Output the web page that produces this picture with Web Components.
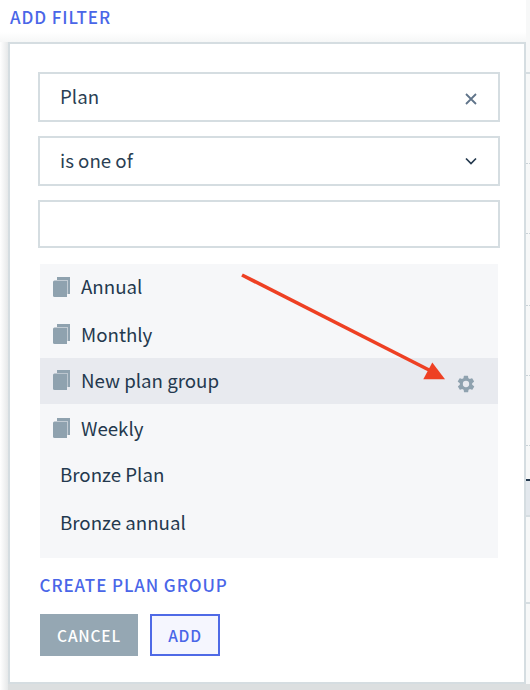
<!DOCTYPE html>
<html>
<head>
<meta charset="utf-8">
<style>
  html, body { margin: 0; height: 100%; background: #fff; overflow: hidden; }
  body { font-family: "Noto Sans CJK SC", "Noto Sans", sans-serif; color: #24394e; }
</style>
</head>
<body>
<filter-page>
  <filter-popup>
    <filter-field value="Plan" icon="clear"></filter-field>
    <filter-field value="is one of" icon="chevron"></filter-field>
    <filter-field short></filter-field>
    <plan-list>
      <plan-row group>Annual</plan-row>
      <plan-row group>Monthly</plan-row>
      <plan-row group active>New plan group</plan-row>
      <plan-row group>Weekly</plan-row>
      <plan-row>Bronze Plan</plan-row>
      <plan-row>Bronze annual</plan-row>
    </plan-list>
    <popup-link slot="footer">CREATE PLAN GROUP</popup-link>
    <popup-button slot="footer" kind="cancel">CANCEL</popup-button>
    <popup-button slot="footer" kind="add">ADD</popup-button>
  </filter-popup>
</filter-page>

<script>
class FilterPage extends HTMLElement {
  constructor() {
    super();
    this.attachShadow({ mode: "open" }).innerHTML = `
      <style>
        :host { display: block; position: relative; width: 530px; height: 690px; overflow: hidden; }
        .title { position: relative; padding: 5px 0 0 10px; font-size: 17px; line-height: 24px; font-weight: 500; letter-spacing: 0.9px; color: #4a66e8; }
        .arrow { position: absolute; left: 0; top: 0; pointer-events: none; }
        /* table that sits behind the popup, only its right edge shows */
        .behind { position: absolute; left: 526px; top: 0; width: 4px; height: 690px; background: #f7f8f8; }
        .behind i { position: absolute; left: 0; width: 4px; height: 2px; background: #d5dde1; }
        .behind i.dash { height: 1px; background: repeating-linear-gradient(90deg, #c9d2d7 0 2px, transparent 2px 3px); }
        .behind i.dark { height: 2px; background: #24394e; }
        .behind i.sel { height: 35px; background: #e3e8ed; }
        .top-shade { position: absolute; left: 0; top: 32px; width: 530px; height: 10px; background: linear-gradient(180deg, #fff, #f6f7f7); }
        .page-shade { position: absolute; left: 0; top: 42px; width: 8px; height: 648px; background: linear-gradient(90deg, #fff, #e6e8e9); }
        .bottom-shade { position: absolute; left: 8px; top: 684px; width: 522px; height: 6px; background: #dcdfe0; }
      </style>
      <div class="top-shade"></div>
      <div class="page-shade"></div>
      <div class="behind">
        <i style="top:72px"></i>
        <i class="dash" style="top:163px"></i>
        <i class="dash" style="top:233px"></i>
        <i class="dash" style="top:305px"></i>
        <i class="dash" style="top:375px"></i>
        <i class="dash" style="top:445px"></i>
        <i class="sel" style="top:481px"></i>
        <i class="dark" style="top:479px"></i>
        <i style="top:515px"></i>
        <i style="top:602px"></i>
      </div>
      <div class="bottom-shade"></div>
      <div class="title">ADD FILTER</div>
      <slot></slot>
      <svg class="arrow" width="530" height="690" viewBox="0 0 530 690">
        <path d="M242 275 L431 371" stroke="#ee4023" stroke-width="3.6" fill="none"/>
        <path d="M432.3 362.5 L445 379.3 L423.3 379.3 Z" fill="#ee4023"/>
      </svg>
    `;
  }
}

class FilterPopup extends HTMLElement {
  constructor() {
    super();
    this.attachShadow({ mode: "open" }).innerHTML = `
      <style>
        :host {
          display: block; position: relative; box-sizing: border-box; margin: 13px 0 0 8px; width: 518px; height: 642px;
          padding: 28px 24px 0 28px; background: #fff; border: 2px solid #d5dde1;
        }
        .fields { display: flex; flex-direction: column; gap: 14px; }
      </style>
      <div class="fields"><slot></slot></div>
      <slot name="footer"></slot>
    `;
  }
}

class FilterField extends HTMLElement {
  constructor() {
    super();
    const icon = this.getAttribute("icon");
    const icons = {
      clear: `<svg style="margin-top:3px" width="14" height="14" viewBox="0 0 14 14"><path d="M2 2 L12 12 M12 2 L2 12" stroke="#60748a" stroke-width="1.8" fill="none"/></svg>`,
      chevron: `<svg width="14" height="10" viewBox="0 0 14 10"><path d="M2 2.5 L7 7.5 L12 2.5" stroke="#24394e" stroke-width="1.7" fill="none"/></svg>`,
    };
    this.attachShadow({ mode: "open" }).innerHTML = `
      <style>
        :host {
          display: flex; align-items: center; justify-content: space-between; box-sizing: border-box;
          height: 50px; padding: 0 20px 0 20px; border: 2px solid #d5dde1; background: #fff;
          font-size: 18.7px; line-height: 26px; color: #2b3f54;
        }
        :host([short]) { height: 48px; }
        span { position: relative; top: -1px; }
        svg { display: block; }
      </style>
      <span>${this.getAttribute("value") || ""}</span>
      ${icons[icon] || ""}
    `;
  }
}

class PlanList extends HTMLElement {
  constructor() {
    super();
    this.attachShadow({ mode: "open" }).innerHTML = `
      <style>
        :host { display: block; margin: 2px 2px 0; padding-bottom: 12px; background: #f6f7f9; }
      </style>
      <slot></slot>
    `;
  }
}

class PlanRow extends HTMLElement {
  constructor() {
    super();
    const group = this.hasAttribute("group");
    const active = this.hasAttribute("active");
    this.attachShadow({ mode: "open" }).innerHTML = `
      <style>
        :host {
          display: flex; align-items: center; box-sizing: border-box; height: 47px; padding-left: 13px;
          font-size: 18.7px; line-height: 26px; color: #24394e;
        }
        :host([active]) { background: #e8eaef; height: 46px; margin-bottom: 1px; }
        :host(:not([group])) { padding-left: 20px; }
        .book { margin-right: 11px; flex: none; margin-top: -2px; }
        span { position: relative; top: -2px; }
        :host([active]) span { top: -1.5px; }
        :host(:nth-child(even)) span { top: -1px; }
        .gear { margin-left: auto; margin-right: 22px; margin-top: 6px; }
      </style>
      ${group ? `<svg class="book" width="17" height="20" viewBox="0 0 17 20">
        <path d="M4 0 H17 V17 H14.5 V3 H4 Z" fill="#8fa2af"/>
        <path d="M1.5 3.5 H14 V20 H1.5 Q0 20 0 18.5 V5 Q0 3.5 1.5 3.5 Z" fill="#8fa2af"/>
      </svg>` : ""}
      <span><slot></slot></span>
      ${active ? `<svg class="gear" width="20" height="20" viewBox="0 0 24 24">
        <path fill="#8fa2af" fill-rule="evenodd" d="M19.4 13a7.6 7.6 0 0 0 0-2l2.1-1.6a.5.5 0 0 0 .1-.6l-2-3.5a.5.5 0 0 0-.6-.2l-2.5 1a7.3 7.3 0 0 0-1.7-1l-.4-2.6a.5.5 0 0 0-.5-.4h-4a.5.5 0 0 0-.5.4l-.4 2.6a7.3 7.3 0 0 0-1.7 1l-2.5-1a.5.5 0 0 0-.6.2l-2 3.5a.5.5 0 0 0 .1.6L4.6 11a7.6 7.6 0 0 0 0 2l-2.1 1.6a.5.5 0 0 0-.1.6l2 3.5a.5.5 0 0 0 .6.2l2.5-1c.5.4 1.1.7 1.7 1l.4 2.6c0 .2.3.4.5.4h4c.2 0 .5-.2.5-.4l.4-2.6c.6-.3 1.2-.6 1.7-1l2.5 1a.5.5 0 0 0 .6-.2l2-3.5a.5.5 0 0 0-.1-.6zM12 15.8a3.8 3.8 0 1 1 0-7.6 3.8 3.8 0 0 1 0 7.6z"/>
      </svg>` : ""}
    `;
  }
}

class PopupLink extends HTMLElement {
  constructor() {
    super();
    this.attachShadow({ mode: "open" }).innerHTML = `
      <style>
        :host { display: block; margin: 15px 0 17px 1.5px; font-size: 17px; line-height: 24px; font-weight: 500; letter-spacing: 0.9px; color: #4a66e8; }
      </style>
      <slot></slot>
    `;
  }
}

class PopupButton extends HTMLElement {
  constructor() {
    super();
    this.attachShadow({ mode: "open" }).innerHTML = `
      <style>
        :host {
          display: inline-flex; align-items: center; justify-content: center; box-sizing: border-box; height: 42px;
          font-size: 15.5px; font-weight: 500; letter-spacing: 0.8px; vertical-align: top;
        }
        :host([kind="cancel"]) { width: 98px; margin-left: 2px; margin-right: 12px; background: #95a7b3; color: #fff; }
        :host([kind="add"]) { width: 70px; border: 2px solid #4f6ae6; background: #f5f6fe; color: #4a66e8; }
      </style>
      <slot></slot>
    `;
  }
}

customElements.define("filter-page", FilterPage);
customElements.define("filter-popup", FilterPopup);
customElements.define("filter-field", FilterField);
customElements.define("plan-list", PlanList);
customElements.define("plan-row", PlanRow);
customElements.define("popup-link", PopupLink);
customElements.define("popup-button", PopupButton);
</script>
</body>
</html>
